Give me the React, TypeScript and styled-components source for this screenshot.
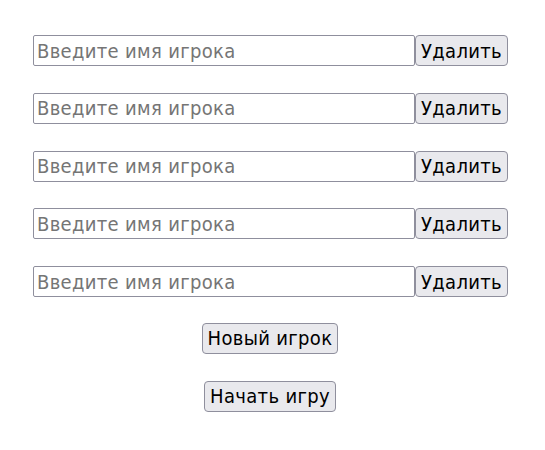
import React from "react";
import styled, { createGlobalStyle } from "styled-components";

const GlobalStyle = createGlobalStyle`
  body {
    margin: 0;
    background: #ffffff;
    font-family: "DejaVu Sans Condensed", "DejaVu Sans", sans-serif;
  }
`;

const Page = styled.div({
  width: "545px",
  paddingTop: "35px",
  paddingLeft: "33px",
  boxSizing: "border-box",
  display: "flex",
  flexDirection: "column",
  gap: "26.75px",
});

const Row = styled.div({
  display: "flex",
  height: "31px",
});

const NameInput = styled.input({
  width: "382px",
  height: "31px",
  boxSizing: "border-box",
  border: "1px solid #8f8f9d",
  borderRadius: "2px",
  padding: "0 3px",
  fontFamily: '"DejaVu Sans Condensed", "DejaVu Sans", sans-serif',
  fontSize: "20px",
  letterSpacing: "0.33px",
  color: "#000",
  outline: "none",
  "&::placeholder": {
    color: "#757575",
  },
});

const Button = styled.button({
  height: "31px",
  boxSizing: "border-box",
  border: "1px solid #8f8f9d",
  borderRadius: "4px",
  background: "#e9e9ed",
  padding: "0 5px",
  fontFamily: '"DejaVu Sans Condensed", "DejaVu Sans", sans-serif',
  fontSize: "20px",
  letterSpacing: "0.33px",
  color: "#000",
  cursor: "pointer",
});

const Actions = styled.div({
  width: "474px",
  marginTop: "-1px",
  display: "flex",
  flexDirection: "column",
  alignItems: "center",
  gap: "27px",
});

export default function App(): JSX.Element {
  const rows = [0, 1, 2, 3, 4];
  return (
    <>
      <GlobalStyle />
      <Page>
        {rows.map((i) => (
          <Row key={i}>
            <NameInput placeholder="Введите имя игрока" />
            <Button>Удалить</Button>
          </Row>
        ))}
        <Actions>
          <Button>Новый игрок</Button>
          <Button>Начать игру</Button>
        </Actions>
      </Page>
    </>
  );
}
